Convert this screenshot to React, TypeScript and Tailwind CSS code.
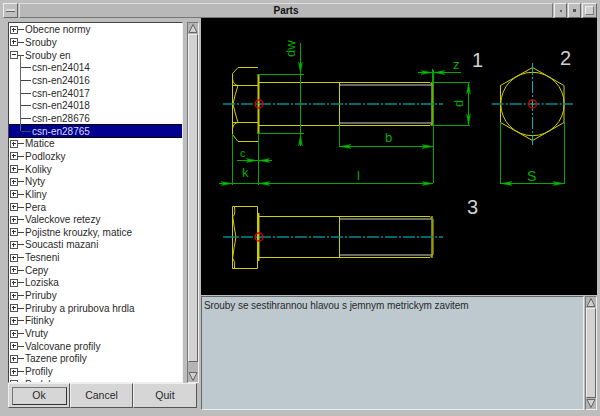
const tree: { label: string; kind: "plus" | "minus" | "leaf"; selected?: boolean; last?: boolean }[] = [
  { label: "Obecne normy", kind: "plus" },
  { label: "Srouby", kind: "plus" },
  { label: "Srouby en", kind: "minus" },
  { label: "csn-en24014", kind: "leaf" },
  { label: "csn-en24016", kind: "leaf" },
  { label: "csn-en24017", kind: "leaf" },
  { label: "csn-en24018", kind: "leaf" },
  { label: "csn-en28676", kind: "leaf" },
  { label: "csn-en28765", kind: "leaf", selected: true, last: true },
  { label: "Matice", kind: "plus" },
  { label: "Podlozky", kind: "plus" },
  { label: "Koliky", kind: "plus" },
  { label: "Nyty", kind: "plus" },
  { label: "Kliny", kind: "plus" },
  { label: "Pera", kind: "plus" },
  { label: "Valeckove retezy", kind: "plus" },
  { label: "Pojistne krouzky, matice", kind: "plus" },
  { label: "Soucasti mazani", kind: "plus" },
  { label: "Tesneni", kind: "plus" },
  { label: "Cepy", kind: "plus" },
  { label: "Loziska", kind: "plus" },
  { label: "Priruby", kind: "plus" },
  { label: "Priruby a prirubova hrdla", kind: "plus" },
  { label: "Fitinky", kind: "plus" },
  { label: "Vruty", kind: "plus" },
  { label: "Valcovane profily", kind: "plus" },
  { label: "Tazene profily", kind: "plus" },
  { label: "Profily", kind: "plus" },
  { label: "Podpl", kind: "plus" },
];

function TreeRow({ row }: { row: (typeof tree)[number] }) {
  if (row.kind === "leaf") {
    return (
      <div className={`relative flex h-[12.67px] items-center pl-[12px] ${row.selected ? "bg-[#000090] text-[#dcdcf0] outline outline-1 outline-black" : ""}`}>
        <span className={`absolute left-[11px] top-[-6px] w-px bg-[#666] ${row.last ? "h-[12px]" : "h-[13px]"}`} />
        <span className="mr-[1px] h-px w-[10px] shrink-0 bg-[#444]" />
        <span>{row.label}</span>
      </div>
    );
  }
  return (
    <div className="relative flex h-[12.67px] items-center pl-[1px]">
      <svg width="8" height="8" viewBox="0 0 8 8" className="shrink-0">
        <rect x="0.5" y="0.5" width="7" height="7" fill="none" stroke="#555" />
        <path d={row.kind === "plus" ? "M2 3.500h4M3.500 2v4" : "M2 3.500h4"} stroke="#333" />
      </svg>
      <span className="mr-[1px] h-px w-[6px] shrink-0 bg-[#444]" />
      <span>{row.label}</span>
    </div>
  );
}

function ScrollBar({ className, gap }: { className: string; gap?: boolean }) {
  return (
    <div className={`flex flex-col bg-[#b4b4b4] border border-t-[#777] border-l-[#777] border-r-[#eee] border-b-[#eee] ${className}`}>
      <svg width="10" height="11" viewBox="0 0 10 11" className="shrink-0">
        <path d="M5 1.500 L9 9.500 H1 Z" fill="#d0d0d0" stroke="#666" />
      </svg>
      <div className={`flex-1 border border-t-[#eee] border-l-[#eee] border-r-[#666] border-b-[#666] bg-[#d2d2d2] ${gap ? "mb-[9px]" : ""}`} />
      <svg width="10" height="11" viewBox="0 0 10 11" className="shrink-0">
        <path d="M5 9.500 L9 1.500 H1 Z" fill="#d0d0d0" stroke="#666" />
      </svg>
    </div>
  );
}

function Btn({ label, active, width }: { label: string; active?: boolean; width: string }) {
  return (
    <div className={`flex h-[25px] items-center justify-center border border-t-[#eee] border-l-[#eee] border-r-[#555] border-b-[#555] bg-[#d6d6d6] ${width}`}>
      {active ? (
        <div className="flex h-[18px] w-[55px] items-center justify-center border border-t-[#777] border-l-[#777] border-r-[#333] border-b-[#333]">{label}</div>
      ) : (
        label
      )}
    </div>
  );
}

function Arrow({ x, y, dir }: { x: number; y: number; dir: "l" | "r" | "u" | "d" }) {
  const p = {
    r: `${x},${y} ${x - 11},${y - 2} ${x - 8},${y} ${x - 11},${y + 2}`,
    l: `${x},${y} ${x + 11},${y - 2} ${x + 8},${y} ${x + 11},${y + 2}`,
    d: `${x},${y} ${x - 2},${y - 11} ${x},${y - 8} ${x + 2},${y - 11}`,
    u: `${x},${y} ${x - 2},${y + 11} ${x},${y + 8} ${x + 2},${y + 11}`,
  }[dir];
  return <polygon points={p} fill="#00c000" stroke="#00a000" strokeWidth="0.5" />;
}

function Bolt({ cy, half, headHalf }: { cy: number; half: number; headHalf: number }) {
  return (
    <g fill="none">
      <path d={`M339.500 ${cy - half + 3}H432M339.500 ${cy + half - 3}H432`} stroke="#8c8c8c" strokeWidth="1.500" />
      <path d={`M259 ${cy - half + 0.5}H430l3 3V${cy + half - 3.5}l-3 3H259M339.500 ${cy - half}V${cy + half}`} stroke="#d0d000" />
      <path d={`M258.500 ${cy - headHalf + 7}V${cy + headHalf - 7}`} stroke="#c8c800" strokeWidth="2" />
      <path d={`M432 ${cy - half}V${cy + half}`} stroke="#a8a800" strokeWidth="1.500" />
    </g>
  );
}

function Drawing() {
  const label = { fill: "#00b000", fontFamily: "'Liberation Sans', sans-serif", fontSize: 13 };
  const num = { fill: "#d0d0d0", fontFamily: "'Liberation Sans', sans-serif", fontSize: 20 };
  return (
    <svg viewBox="201 18 386 277" width="386" height="277" className="block">
      {/* side view */}
      <Bolt cy={104} half={22} headHalf={37} />
      <g fill="none" stroke="#d0d000">
        <path d="M258 67.500H238l-5.500 6V134.500l5.500 7h20" />
        <path d="M233 85.500H258M233 122.500H258" />
        <path d="M232.500 79q1 6 5.500 6.500q-3 9-5 18.500q2 9 5 18.500q-4.500 .5-5.500 6" />
      </g>
      {/* bottom view */}
      <Bolt cy={237} half={21} headHalf={31} />
      <g fill="none" stroke="#d0d000">
        <path d="M232.500 206.500H257.500V268.500H232.500Z" />
        <path d="M234.500 206.500q1 8-1.500 10M234.500 268.500q1-7-1.500-10M232.500 215q1.500 12 3.500 22q-2 10-3.500 22" />
      </g>
      {/* hex view */}
      <g fill="none" stroke="#d0d000">
        <polygon points="532.500,67.500 564,85.500 564,122.500 532.500,140.500 500.500,122.500 500.500,85.500" />
        <circle cx="532.500" cy="104" r="31.700" />
      </g>
      {/* centre lines */}
      <g stroke="#008c8c" strokeWidth="1.400" strokeDasharray="12 2 2 2">
        <path d="M223 104H443M491.700 104H573M223 237H443" />
        <path d="M532.500 63V145" stroke="#00b4b4" strokeWidth="1" />
      </g>
      <g fill="none" stroke="#d80000" strokeWidth="1.300">
        <circle cx="259" cy="104" r="4" />
        <circle cx="259" cy="237" r="4" />
        <circle cx="532.500" cy="104" r="4" />
      </g>
      <path d="M258 103l2 2M258 236l2 2M531.500 103l2 2" stroke="#e08000" />
      {/* dimensions */}
      <g fill="none" stroke="#00a800">
        <path d="M300.500 43V146M258 74.500H304M258 133.500H304" />
        <path d="M339.500 125V147M339.500 146.500H433M433.500 70V183" />
        <path d="M219 183.500H433M232.500 134V185M258.500 134V185" />
        <path d="M237 160.500H272M418 72.500H461M432.500 69V83" />
        <path d="M468.500 82V125M433 82.500H470M433 125.500H470" />
        <path d="M500.500 122V184M564.500 122V184M500.500 183.500H564" />
      </g>
      <Arrow x={300.5} y={73} dir="d" />
      <Arrow x={300.5} y={135} dir="u" />
      <Arrow x={340} y={146.5} dir="l" />
      <Arrow x={433} y={146.5} dir="r" />
      <Arrow x={232} y={183.5} dir="r" />
      <Arrow x={259} y={183.5} dir="l" />
      <Arrow x={433} y={183.5} dir="r" />
      <Arrow x={257} y={160.5} dir="r" />
      <Arrow x={259} y={160.5} dir="l" />
      <Arrow x={432} y={72.5} dir="r" />
      <Arrow x={434} y={72.5} dir="l" />
      <Arrow x={468.5} y={83} dir="u" />
      <Arrow x={468.5} y={125} dir="d" />
      <Arrow x={501} y={183.5} dir="l" />
      <Arrow x={564} y={183.5} dir="r" />
      <text {...label} x="0" y="0" transform="translate(295 57) rotate(-90)">dw</text>
      <text {...label} x="0" y="0" transform="translate(463 107) rotate(-90)">d</text>
      <text {...label} x="385" y="142">b</text>
      <text {...label} x="357" y="180">l</text>
      <text {...label} x="242" y="177">k</text>
      <text {...label} x="240" y="157" fontSize={11}>c</text>
      <text {...label} x="453" y="69">z</text>
      <text {...label} x="527" y="181" fontSize={14}>S</text>
      <text {...num} x="472" y="67">1</text>
      <text {...num} x="560" y="65">2</text>
      <text {...num} x="467" y="214">3</text>
    </svg>
  );
}

export default function App() {
  return (
    <div className="flex h-[416px] w-[600px] flex-col overflow-hidden bg-[#bdbdbd] p-[3px] font-['Liberation_Sans',sans-serif] text-[10px] text-[#2a2a2a]">
      {/* title bar */}
      <div className="flex h-[15px] shrink-0 items-stretch gap-px">
        <div className="flex w-[15px] items-center justify-center border border-t-[#eee] border-l-[#eee] border-r-[#666] border-b-[#666] bg-[#c0c0c0]">
          <div className="h-[3px] w-[9px] border-b border-[#666] bg-[#ddd]" />
        </div>
        <div className="flex flex-1 items-center justify-center border border-t-[#ddd] border-l-[#ddd] border-r-[#777] border-b-[#777] bg-[#b8b8b8] text-[10px] font-bold text-[#111]">
          Parts
        </div>
        <div className="flex w-[13px] items-center justify-center border border-t-[#eee] border-l-[#eee] border-r-[#666] border-b-[#666]">
          <div className="size-[2px] bg-[#666]" />
        </div>
        <div className="flex w-[13px] items-center justify-center border border-t-[#eee] border-l-[#eee] border-r-[#666] border-b-[#666]">
          <div className="size-[3px] bg-[#555]" />
        </div>
        <div className="flex w-[15px] items-center justify-center border border-t-[#eee] border-l-[#eee] border-r-[#666] border-b-[#666]">
          <div className="size-[9px] border border-t-[#eee] border-l-[#eee] border-r-[#777] border-b-[#777] bg-[#cfcfcf]" />
        </div>
      </div>
      <div className="flex min-h-0 flex-1">
        {/* left column */}
        <div className="flex w-[198px] shrink-0 flex-col pl-[5px] pr-[4px] pt-[4px]">
          <div className="flex min-h-0 flex-1 gap-[4px]">
            <div className="h-[361px] w-[175px] shrink-0 overflow-hidden border border-t-[#444] border-l-[#444] border-r-[#eee] border-b-[#eee] bg-white pt-[0.500px]">
              {tree.map((row) => (
                <TreeRow key={row.label} row={row} />
              ))}
            </div>
            <ScrollBar className="h-[361px] w-[12px]" gap />
          </div>
          <div className="mb-[5px] flex shrink-0 text-[10.500px]">
            <Btn label="Ok" active width="w-[62px]" />
            <Btn label="Cancel" width="w-[63px]" />
            <Btn label="Quit" width="w-[64px]" />
          </div>
        </div>
        {/* right column */}
        <div className="flex min-w-0 flex-1 flex-col">
          <div className="h-[277px] shrink-0 bg-black">
            <Drawing />
          </div>
          <div className="mt-px mb-[3px] flex min-h-0 flex-1">
            <div className="flex-1 border border-t-[#666] border-l-[#666] border-r-[#eee] border-b-[#eee] bg-[#bdc9ce] pl-[2px] pt-px tracking-[-0.07px]">
              Srouby se sestihrannou hlavou s jemnym metrickym zavitem
            </div>
            <ScrollBar className="ml-px w-[12px]" />
          </div>
        </div>
      </div>
    </div>
  );
}
